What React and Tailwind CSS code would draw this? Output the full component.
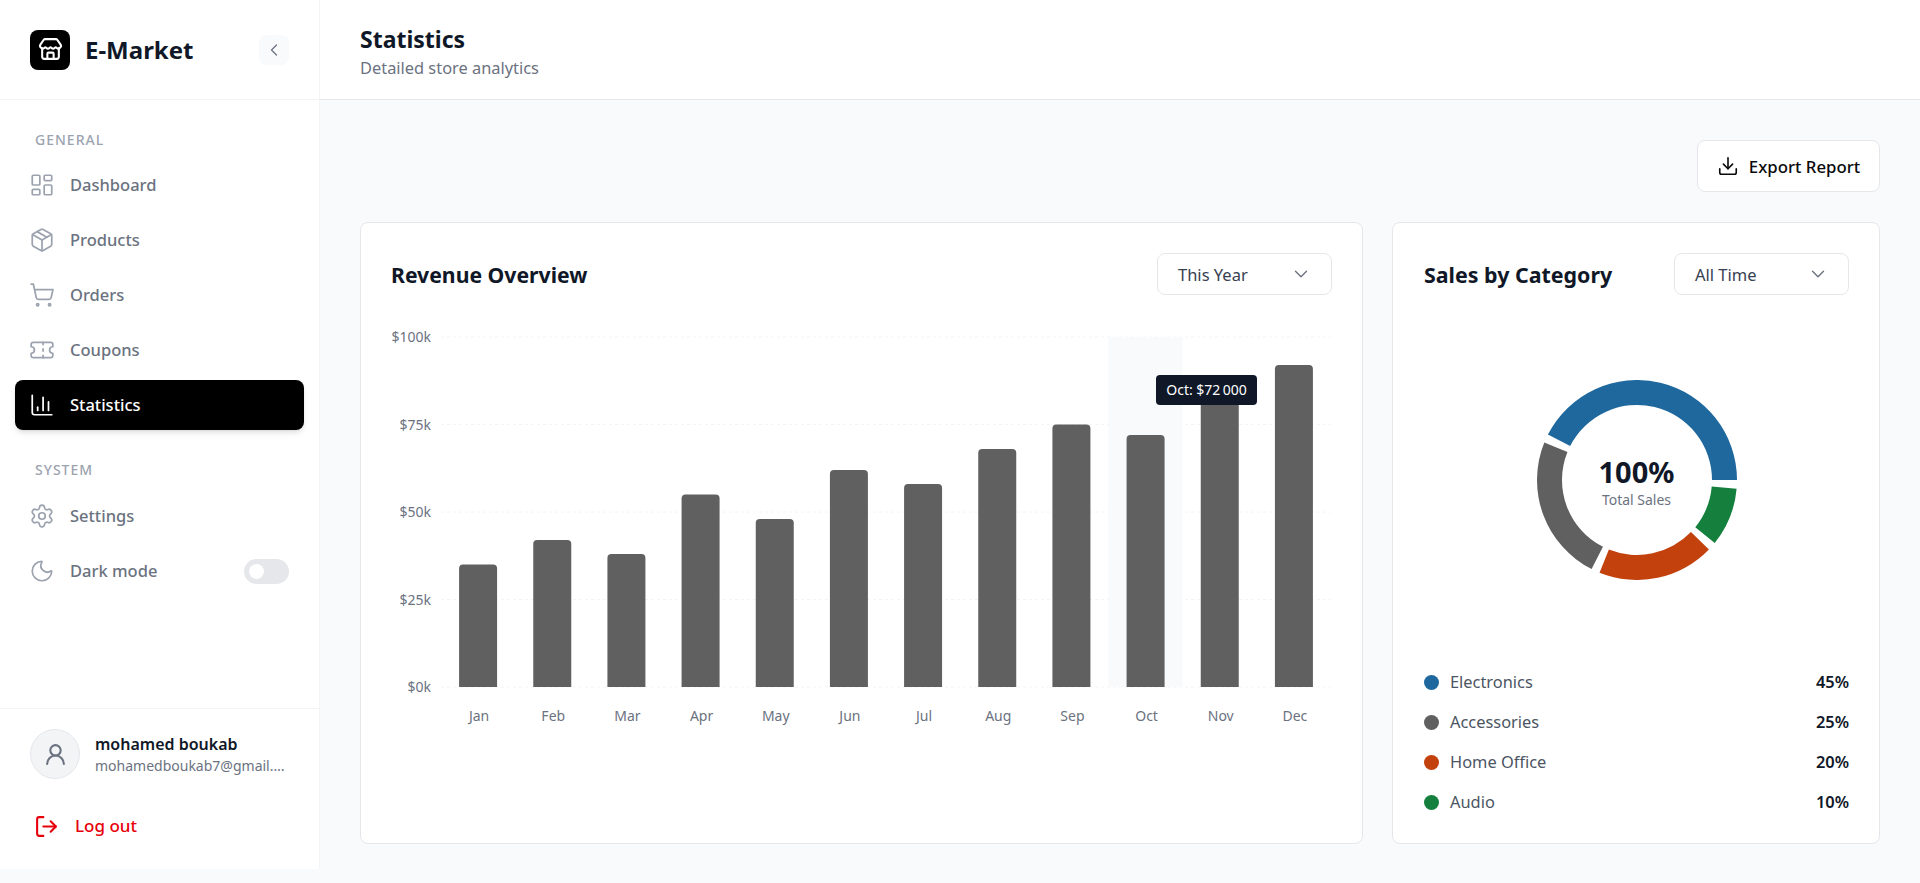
import React from 'react';
import {
  Store, ChevronLeft, ChevronDown, LayoutDashboard, Package, ShoppingCart, Ticket,
  ChartColumn, Settings, Moon, UserRound, LogOut, Download,
} from 'lucide-react';

const FONT = { fontFamily: '"Noto Sans", "Open Sans", sans-serif' };

const MONTHS = [
  ['Jan', 35], ['Feb', 42], ['Mar', 38], ['Apr', 55], ['May', 48], ['Jun', 62],
  ['Jul', 58], ['Aug', 68], ['Sep', 75], ['Oct', 72], ['Nov', 85], ['Dec', 92],
];

const CATEGORIES = [
  { name: 'Electronics', value: 45, color: '#1f689e', dot: 'bg-[#1f689e]' },
  { name: 'Accessories', value: 25, color: '#606060', dot: 'bg-[#606060]' },
  { name: 'Home Office', value: 20, color: '#c2410c', dot: 'bg-[#c2410c]' },
  { name: 'Audio', value: 10, color: '#15803d', dot: 'bg-[#15803d]' },
];

function NavItem({ icon: Icon, label, active }) {
  return (
    <div className={`flex h-[50px] items-center gap-[15px] rounded-lg px-[14px] text-[16.5px] font-medium ${active ? 'bg-black text-white shadow-md' : 'text-[#6b7280]'}`}>
      <Icon size={26} strokeWidth={1.6} className={active ? 'text-white' : 'text-[#9ca3af]'} />
      <span>{label}</span>
    </div>
  );
}

function SectionLabel({ children }) {
  return <div className="px-5 text-sm font-medium uppercase leading-5 tracking-[1px] text-[#9ca3af]">{children}</div>;
}

function Sidebar() {
  return (
    <aside className="flex h-[869px] w-[320px] shrink-0 flex-col border-r border-[#f3f4f6] bg-white">
      <div className="flex h-[100px] shrink-0 items-center justify-between border-b border-[#f3f4f6] pl-[30px] pr-[30px]">
        <div className="flex items-center gap-[15px]">
          <div className="flex h-10 w-10 items-center justify-center rounded-lg bg-black text-white">
            <Store size={25} strokeWidth={2} />
          </div>
          <span className="text-2xl font-bold text-[#101828]">E-Market</span>
        </div>
        <div className="flex h-[30px] w-[30px] items-center justify-center rounded-lg bg-[#f9fafb] text-[#6b7280]">
          <ChevronLeft size={20} strokeWidth={1.5} />
        </div>
      </div>

      <nav className="flex flex-1 flex-col px-[15px] pt-[30px]">
        <SectionLabel>General</SectionLabel>
        <div className="mt-[10px] flex flex-col gap-[5px]">
          <NavItem icon={LayoutDashboard} label="Dashboard" />
          <NavItem icon={Package} label="Products" />
          <NavItem icon={ShoppingCart} label="Orders" />
          <NavItem icon={Ticket} label="Coupons" />
          <NavItem icon={ChartColumn} label="Statistics" active />
        </div>
        <div className="mt-[30px]">
          <SectionLabel>System</SectionLabel>
        </div>
        <div className="mt-[11px] flex flex-col gap-[5px]">
          <NavItem icon={Settings} label="Settings" />
          <div className="flex h-[50px] items-center justify-between pl-[14px] pr-[15px] text-[16.5px] font-medium text-[#6b7280]">
            <div className="flex items-center gap-[15px]">
              <Moon size={26} strokeWidth={1.6} className="text-[#9ca3af]" />
              <span>Dark mode</span>
            </div>
            <div className="flex h-[25px] w-[45px] items-center rounded-full bg-[#e5e7eb] pl-[5px]">
              <div className="h-[15px] w-[15px] rounded-full bg-white" />
            </div>
          </div>
        </div>
      </nav>

      <div className="border-t border-[#f3f4f6] px-[30px] pt-5 pb-[29px]">
        <div className="flex items-center gap-[15px]">
          <div className="flex h-[50px] w-[50px] shrink-0 items-center justify-center rounded-full border border-[#e5e7eb] bg-[#f3f4f6] text-[#6b7280]">
            <UserRound size={25} />
          </div>
          <div className="min-w-0 flex-1">
            <div className="truncate text-base font-semibold leading-6 text-[#101828]">mohamed boukab</div>
            <div className="truncate text-sm leading-5 text-[#6b7280]">mohamedboukab7@gmail.com</div>
          </div>
        </div>
        <div className="mt-[33px] flex h-7 items-center gap-[16px] pl-[4px] text-[17px] font-medium leading-6 text-[#e7000b]">
          <LogOut size={25} strokeWidth={2} />
          <span>Log out</span>
        </div>
      </div>
    </aside>
  );
}

function Select({ label }) {
  return (
    <div className="flex h-[42px] w-[175px] items-center justify-between rounded-lg border border-[#e5e7eb] bg-white pl-5 pr-[19px] text-[16.5px] text-[#374151]">
      <span className="pt-[3px]">{label}</span>
      <ChevronDown size={22} strokeWidth={1.5} className="text-[#6b7280]" />
    </div>
  );
}

function RevenueChart() {
  const left = 50;
  const band = 890 / 12;
  const barWidth = 38;
  const top = 15;
  const bottom = 365;
  return (
    <div className="relative mt-[27px] h-[430px]">
      <svg width="940" height="430" className="block">
        {[100, 75, 50, 25, 0].map((tick) => {
          const y = bottom - tick * 3.5;
          return (
            <g key={tick}>
              <line x1={left} x2={left + 890} y1={y} y2={y} stroke="#f3f4f6" strokeDasharray="3 3" />
              <text x={left - 10} y={y + 5} textAnchor="end" fontSize="14" fill="#6b7280">${tick === 0 ? '0' : tick}k</text>
            </g>
          );
        })}
        <rect x={left + band * 9} y={top} width={band} height={bottom - top} fill="#f9fafb" />
        {MONTHS.map(([month, value], i) => {
          const x = left + band * i + (band - barWidth) / 2;
          const y = bottom - value * 3.5;
          return (
            <g key={month}>
              <path d={`M${x} ${bottom}V${y + 4}a4 4 0 0 1 4 -4H${x + barWidth - 4}a4 4 0 0 1 4 4V${bottom}Z`} fill="#606060" />
              <text x={x + barWidth / 2 + 1} y={bottom + 34} textAnchor="middle" fontSize="14" fill="#6b7280">{month}</text>
            </g>
          );
        })}
      </svg>
      <div className="absolute left-[765px] top-[53px] flex h-[30px] w-[101px] items-center justify-center rounded bg-[#101828] text-sm text-white">
        Oct: $72{'\u202f'}000
      </div>
    </div>
  );
}

function polar(r, deg) {
  const rad = (deg * Math.PI) / 180;
  return [r * Math.cos(rad), -r * Math.sin(rad)];
}

function DonutChart() {
  const pad = 5;
  const total = 360 - pad * CATEGORIES.length;
  let start = 0;
  return (
    <div className="relative mx-auto h-[200px] w-[200px]">
      <svg width="200" height="200" viewBox="-100 -100 200 200" className="block">
        {CATEGORIES.map((c) => {
          const sweep = (c.value / 100) * total;
          const end = start + sweep;
          const [x1, y1] = polar(100, start);
          const [x2, y2] = polar(100, end);
          const [x3, y3] = polar(75, end);
          const [x4, y4] = polar(75, start);
          const large = sweep > 180 ? 1 : 0;
          const d = `M${x1} ${y1}A100 100 0 ${large} 0 ${x2} ${y2}L${x3} ${y3}A75 75 0 ${large} 1 ${x4} ${y4}Z`;
          start = end + pad;
          return <path key={c.name} d={d} fill={c.color} />;
        })}
      </svg>
      <div className="absolute inset-0 flex flex-col items-center justify-center pt-[4px]">
        <div className="text-[29px] font-bold leading-9 text-[#101828]">100%</div>
        <div className="text-sm leading-5 text-[#6b7280]">Total Sales</div>
      </div>
    </div>
  );
}

export default function App() {
  return (
    <div className="flex h-screen overflow-hidden bg-[#f9fafb]" style={FONT}>
      <Sidebar />
      <main className="flex min-w-0 flex-1 flex-col">
        <header className="h-[100px] shrink-0 border-b border-[#e5e7eb] bg-white px-10 pt-[23px]">
          <h1 className="text-[23px] font-bold leading-8 text-[#101828]">Statistics</h1>
          <p className="mt-px text-[16.4px] leading-6 text-[#6b7280]">Detailed store analytics</p>
        </header>
        <div className="flex flex-1 flex-col px-10 pt-10">
          <div className="flex justify-end">
            <div className="flex h-[52px] w-[183px] items-center justify-center gap-2.5 rounded-lg border border-[#e5e7eb] bg-white text-[16.8px] font-medium text-[#0a0a0a]">
              <Download size={22} strokeWidth={1.75} />
              <span className="pt-px">Export Report</span>
            </div>
          </div>
          <div className="mt-[30px] flex h-[622px] gap-[29px]">
            <section className="flex-1 rounded-lg border border-[#e5e7eb] bg-white p-[30px]">
              <div className="flex items-center justify-between">
                <h2 className="pt-[2px] text-[21.2px] font-bold text-[#101828]">Revenue Overview</h2>
                <Select label="This Year" />
              </div>
              <RevenueChart />
            </section>
            <section className="flex w-[488px] shrink-0 flex-col rounded-lg border border-[#e5e7eb] bg-white py-[30px] pl-[31px] pr-[30px]">
              <div className="flex items-center justify-between">
                <h2 className="pt-[2px] text-[21.4px] font-bold text-[#101828]">Sales by Category</h2>
                <Select label="All Time" />
              </div>
              <div className="mt-[85px]">
                <DonutChart />
              </div>
              <div className="mt-[90px] flex flex-col gap-4">
                {CATEGORIES.map((c) => (
                  <div key={c.name} className="flex h-6 items-center justify-between text-[16.4px]">
                    <div className="flex items-center gap-[11px] text-[#4b5563]">
                      <span className={`h-[15px] w-[15px] rounded-full ${c.dot}`} />
                      <span>{c.name}</span>
                    </div>
                    <span className="font-semibold text-[#101828]">{c.value}%</span>
                  </div>
                ))}
              </div>
            </section>
          </div>
        </div>
      </main>
    </div>
  );
}
